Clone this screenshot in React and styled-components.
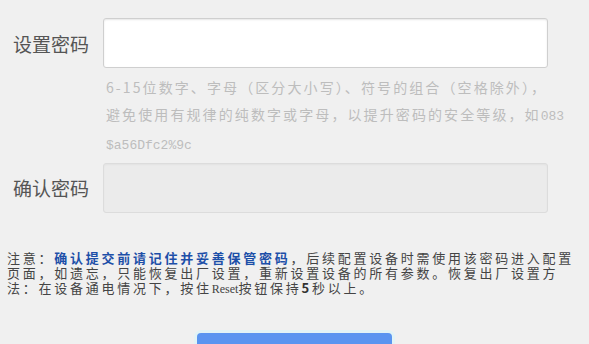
import React from 'react'
import styled, { createGlobalStyle } from 'styled-components';

const GlobalStyle = createGlobalStyle`
  html, body {
    margin: 0;
    padding: 0;
    background: #f0f0f0;
    overflow: hidden;
  }
  body {
    font-family: "Noto Sans CJK SC", "Noto Sans", sans-serif;
  }
`;

const Page = styled.div`
  padding-top: 18px;
`;

const Row = styled.div`
  display: flex;
  align-items: center;
  padding-left: 13px;
  margin-top: ${props => props.gap || 0}px;
`;

const Label = styled.label`
  width: 90px;
  font-size: 19px;
  color: #555;
  line-height: 1;
`;

const Field = styled.input`
  box-sizing: border-box;
  width: 445px;
  height: 50px;
  border: 1px solid ${props => props.disabled ? '#dcdcdc' : '#cfcfcf'};
  border-radius: 3px;
  background: ${props => props.disabled ? '#ebebeb' : '#fff'};
  box-shadow: inset 0 1px 2px rgba(0, 0, 0, ${props => props.disabled ? 0.04 : 0.1});
  outline: none;
`;

const Hint = styled.p`
  margin: 6px 0 0 106px;
  white-space: nowrap;
  font-size: 14px;
  letter-spacing: 2.1px;
  line-height: 26.5px;
  color: #bdbdbd;
`;

const Mono = styled.span`
  font-family: "Liberation Mono", monospace;
  font-size: 13px;
  letter-spacing: 0;
`;

const Notice = styled.p`
  margin: 37px 0 0 7px;
  width: 578px;
  font-size: 13px;
  letter-spacing: 2.75px;
  line-height: 15px;
  color: #444;
`;

const Strong = styled.span`
  color: ${props => props.blue ? '#1d4fa8' : '#333'};
  font-weight: bold;
`;

const Small = styled.span`
  font-family: "Liberation Serif", serif;
  font-size: 12px;
  letter-spacing: 0;
`;

const ButtonBar = styled.div`
  display: flex;
  justify-content: center;
  margin-top: 36px;
`;

const Submit = styled.button`
  box-sizing: border-box;
  width: 195px;
  height: 64px;
  padding: 30px 0 0;
  border: none;
  border-radius: 4px;
  background: #5a94f0;
  box-shadow: 0 0 0 3px #e2f3f6;
  color: #fff;
  font-size: 16px;
`;

export default function App() {
  return (
    <Page>
      <GlobalStyle />
      <Row>
        <Label>设置密码</Label>
        <Field type="password" />
      </Row>
      <Hint>
        6-15位数字、字母（区分大小写）、符号的组合（空格除外），<br />
        避免使用有规律的纯数字或字母，以提升密码的安全等级，如<Mono>083</Mono><br />
        <Mono>$a56Dfc2%9c</Mono>
      </Hint>
      <Row gap={3}>
        <Label>确认密码</Label>
        <Field type="password" disabled />
      </Row>
      <Notice>
        注意：<Strong blue>确认提交前请记住并妥善保管密码</Strong>，后续配置设备时需使用该密码进入配置页面，如遗忘，只能恢复出厂设置，重新设置设备的所有参数。恢复出厂设置方法：在设备通电情况下，按住<Small>Reset</Small>按钮保持<Strong>5</Strong>秒以上。
      </Notice>
      <ButtonBar>
        <Submit>确定</Submit>
      </ButtonBar>
    </Page>
  )
}
